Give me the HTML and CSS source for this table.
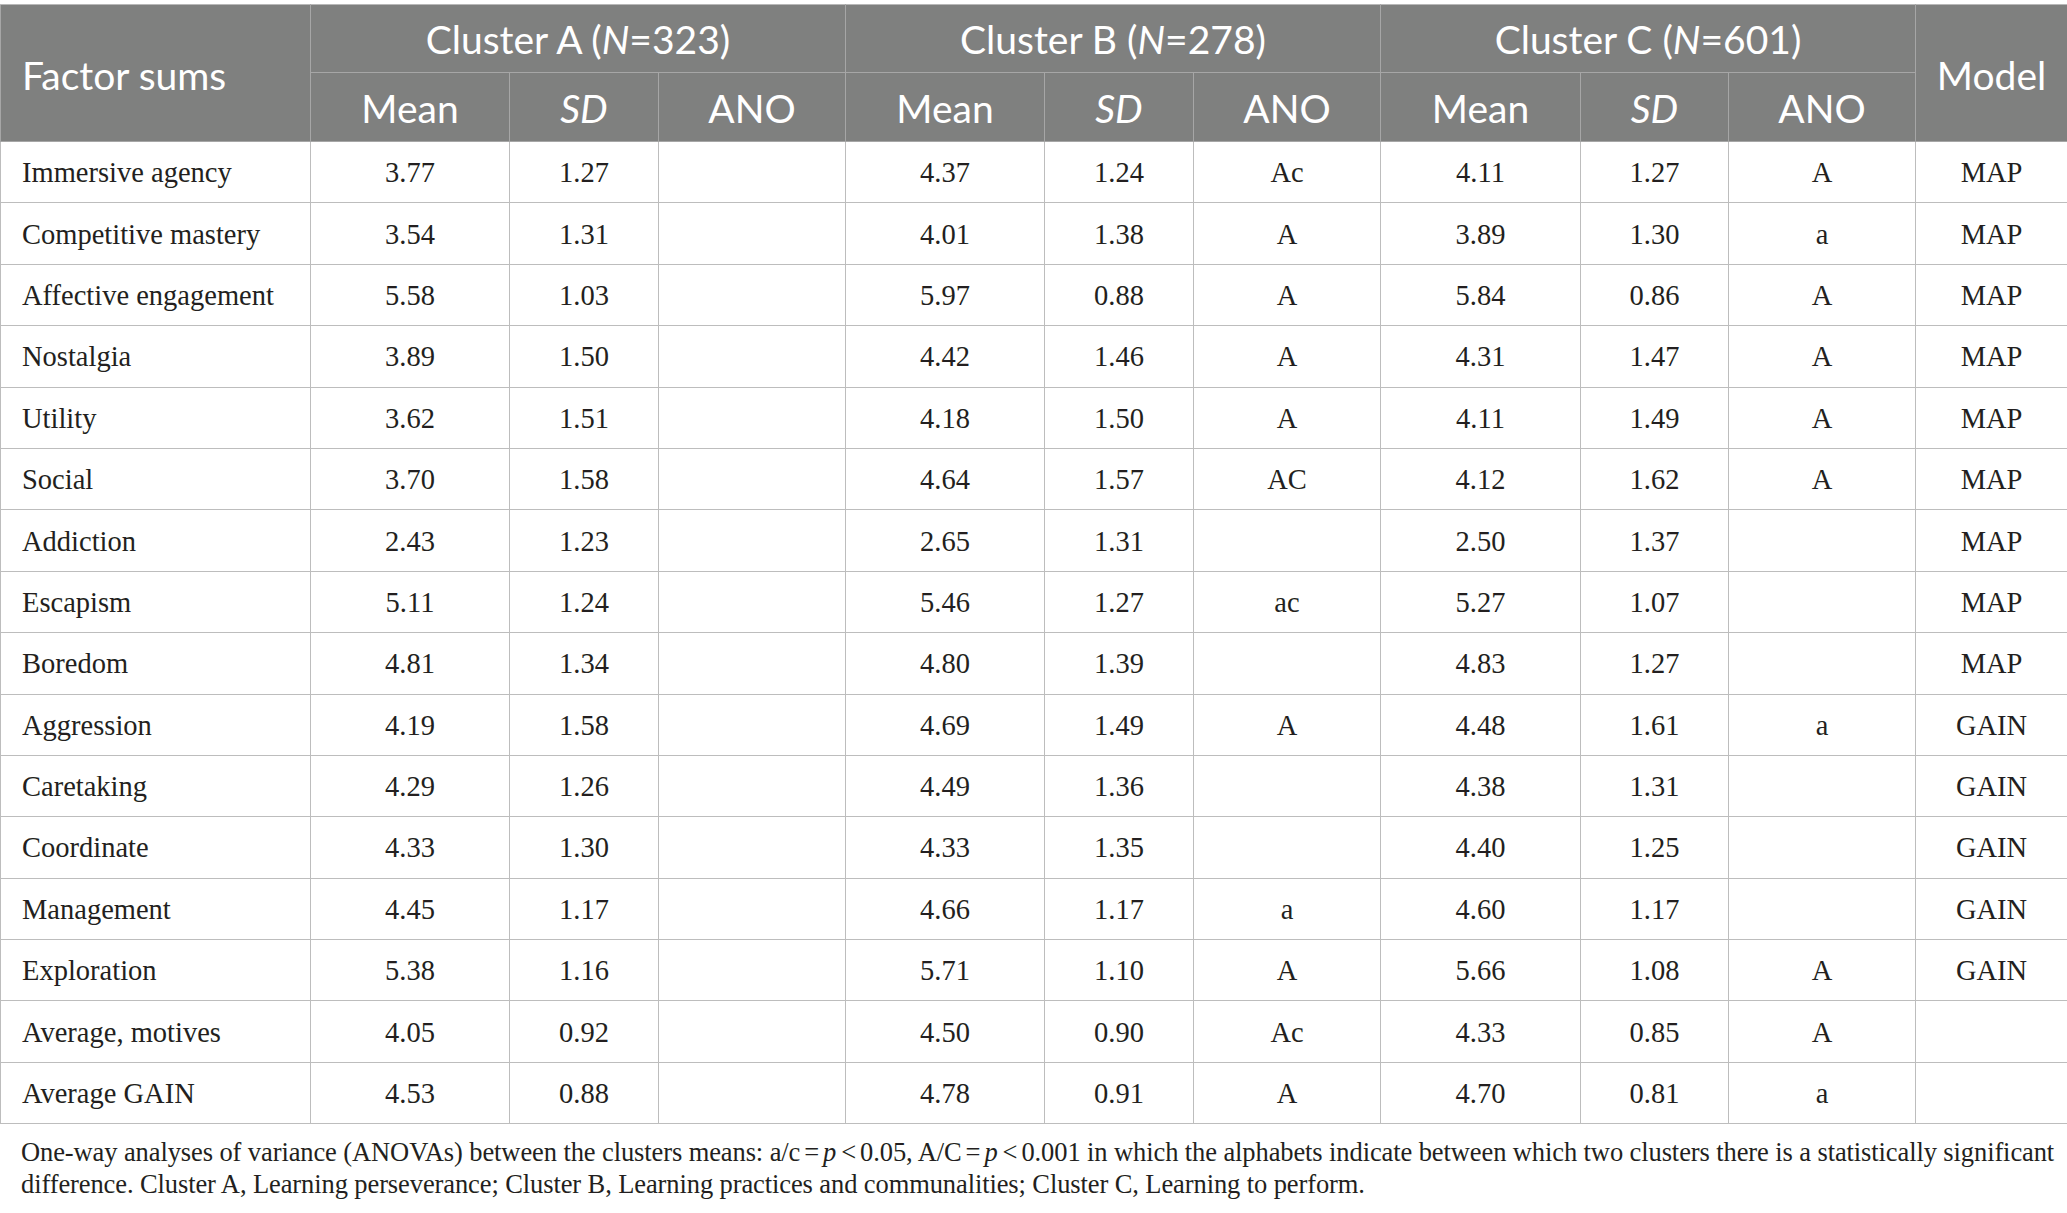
FILE: index.html
```html
<!DOCTYPE html>
<html>
	<head>
		<meta charset="UTF-8">
		<title>Cluster factor sums</title>
		<link rel="stylesheet" href="styles.css">
	</head>
	<body>
		<div class="wrap">
			<table class="data">
				<colgroup>
					<col class="c_name">
					<col class="c_mean"><col class="c_sd"><col class="c_ano">
					<col class="c_mean"><col class="c_sd"><col class="c_ano">
					<col class="c_mean2"><col class="c_sd2"><col class="c_ano">
					<col class="c_model">
				</colgroup>
				<thead>
					<tr class="head_top">
						<th rowspan="2" class="left span2">Factor sums</th>
						<th colspan="3">Cluster A (<i>N</i>=323)</th>
						<th colspan="3">Cluster B (<i>N</i>=278)</th>
						<th colspan="3">Cluster C (<i>N</i>=601)</th>
						<th rowspan="2" class="span2">Model</th>
					</tr>
					<tr class="head_sub">
						<th>Mean</th><th><i>SD</i></th><th>ANO</th>
						<th>Mean</th><th><i>SD</i></th><th>ANO</th>
						<th>Mean</th><th><i>SD</i></th><th>ANO</th>
					</tr>
				</thead>
				<tbody>
					<tr><td class="left">Immersive agency</td><td>3.77</td><td>1.27</td><td></td><td>4.37</td><td>1.24</td><td>Ac</td><td>4.11</td><td>1.27</td><td>A</td><td>MAP</td></tr>
					<tr><td class="left">Competitive mastery</td><td>3.54</td><td>1.31</td><td></td><td>4.01</td><td>1.38</td><td>A</td><td>3.89</td><td>1.30</td><td>a</td><td>MAP</td></tr>
					<tr><td class="left">Affective engagement</td><td>5.58</td><td>1.03</td><td></td><td>5.97</td><td>0.88</td><td>A</td><td>5.84</td><td>0.86</td><td>A</td><td>MAP</td></tr>
					<tr><td class="left">Nostalgia</td><td>3.89</td><td>1.50</td><td></td><td>4.42</td><td>1.46</td><td>A</td><td>4.31</td><td>1.47</td><td>A</td><td>MAP</td></tr>
					<tr><td class="left">Utility</td><td>3.62</td><td>1.51</td><td></td><td>4.18</td><td>1.50</td><td>A</td><td>4.11</td><td>1.49</td><td>A</td><td>MAP</td></tr>
					<tr><td class="left">Social</td><td>3.70</td><td>1.58</td><td></td><td>4.64</td><td>1.57</td><td>AC</td><td>4.12</td><td>1.62</td><td>A</td><td>MAP</td></tr>
					<tr><td class="left">Addiction</td><td>2.43</td><td>1.23</td><td></td><td>2.65</td><td>1.31</td><td></td><td>2.50</td><td>1.37</td><td></td><td>MAP</td></tr>
					<tr><td class="left">Escapism</td><td>5.11</td><td>1.24</td><td></td><td>5.46</td><td>1.27</td><td>ac</td><td>5.27</td><td>1.07</td><td></td><td>MAP</td></tr>
					<tr><td class="left">Boredom</td><td>4.81</td><td>1.34</td><td></td><td>4.80</td><td>1.39</td><td></td><td>4.83</td><td>1.27</td><td></td><td>MAP</td></tr>
					<tr><td class="left">Aggression</td><td>4.19</td><td>1.58</td><td></td><td>4.69</td><td>1.49</td><td>A</td><td>4.48</td><td>1.61</td><td>a</td><td>GAIN</td></tr>
					<tr><td class="left">Caretaking</td><td>4.29</td><td>1.26</td><td></td><td>4.49</td><td>1.36</td><td></td><td>4.38</td><td>1.31</td><td></td><td>GAIN</td></tr>
					<tr><td class="left">Coordinate</td><td>4.33</td><td>1.30</td><td></td><td>4.33</td><td>1.35</td><td></td><td>4.40</td><td>1.25</td><td></td><td>GAIN</td></tr>
					<tr><td class="left">Management</td><td>4.45</td><td>1.17</td><td></td><td>4.66</td><td>1.17</td><td>a</td><td>4.60</td><td>1.17</td><td></td><td>GAIN</td></tr>
					<tr><td class="left">Exploration</td><td>5.38</td><td>1.16</td><td></td><td>5.71</td><td>1.10</td><td>A</td><td>5.66</td><td>1.08</td><td>A</td><td>GAIN</td></tr>
					<tr><td class="left">Average, motives</td><td>4.05</td><td>0.92</td><td></td><td>4.50</td><td>0.90</td><td>Ac</td><td>4.33</td><td>0.85</td><td>A</td><td></td></tr>
					<tr><td class="left">Average GAIN</td><td>4.53</td><td>0.88</td><td></td><td>4.78</td><td>0.91</td><td>A</td><td>4.70</td><td>0.81</td><td>a</td><td></td></tr>
				</tbody>
			</table>
			<p class="note">One-way analyses of variance (ANOVAs) between the clusters means: a/c<span class="op">=</span><i>p</i><span class="op">&lt;</span>0.05, A/C<span class="op">=</span><i>p</i><span class="op">&lt;</span>0.001 in which the alphabets indicate between which two clusters there is a statistically significant<br>difference. Cluster A, Learning perseverance; Cluster B, Learning practices and communalities; Cluster C, Learning to perform.</p>
		</div>
	</body>
</html>
```

FILE: styles.css
```css
* {
	margin: 0;
	padding: 0;
	box-sizing: border-box;
}
body {
	background: #fff;
	color: #231f20;
	font-family: "Liberation Serif", "Times New Roman", serif;
}

.wrap {
	width: 2067px;
	padding-top: 4px;
}

.data {
	width: 2067px;
	border-collapse: collapse;
	table-layout: fixed;
}
.c_name  { width: 310px; }
.c_mean  { width: 199px; }
.c_sd    { width: 149px; }
.c_ano   { width: 187px; }
.c_mean2 { width: 200px; }
.c_sd2   { width: 148px; }
.c_model { width: 152px; }

.data th {
	background-color: #7f807f;
	color: #fff;
	font-family: "Lato", "Open Sans", sans-serif;
	font-weight: 400;
	font-size: 39px;
	line-height: 44px;
	text-align: center;
	border: 1px solid #a6a6a6;
	border-top-color: #b8b8b8;
}
.head_top th {
	height: 68px;
	padding-top: 0;
}
.head_sub th {
	height: 69px;
	padding-top: 2px;
}
.data th.span2 {
	padding-top: 3px;
}

.data td {
	height: 61.4px;
	border: 1px solid #bdbdbd;
	text-align: center;
	font-size: 28.5px;
	padding-top: 2px;
}
.data .left {
	text-align: left;
	padding-left: 21px;
}

.note {
	font-size: 26.5px;
	line-height: 32px;
	letter-spacing: -0.1px;
	padding: 12px 0 0 21px;
}
.note .op {
	margin: 0 4px;
}
.note i {
	margin-right: 1px;
}
```
